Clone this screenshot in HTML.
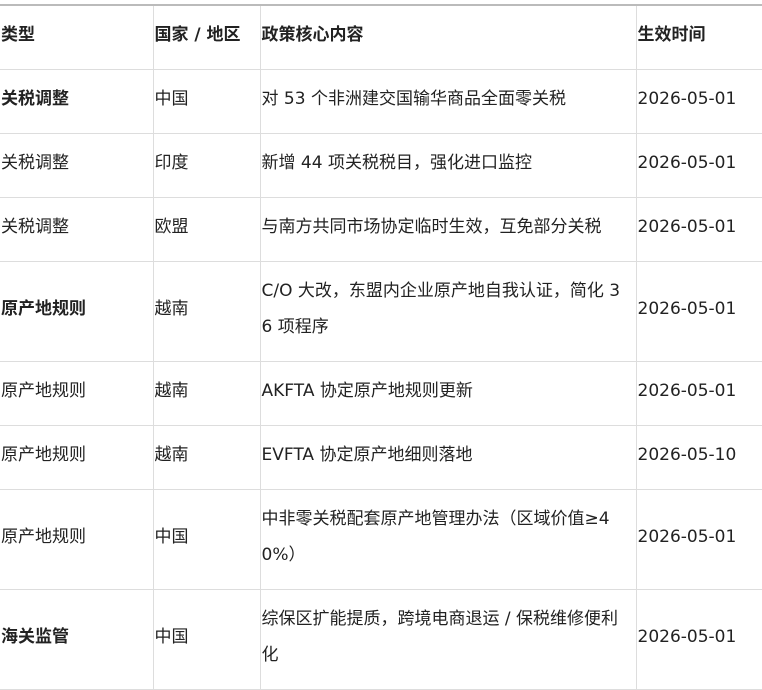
<!DOCTYPE html>
<html><head><meta charset="utf-8"><style>
body{margin:0;background:#fff;}
table{position:absolute;left:0;top:4px;border-collapse:collapse;table-layout:fixed;width:762px;border-top:2px solid #bbb;font-family:"DejaVu Sans","Noto Sans CJK SC",sans-serif;font-size:17px;color:#222;}
td,th{border:1px solid #ddd;padding:0 1px 5px 1px;line-height:36px;text-align:left;vertical-align:middle;word-break:break-all;}
tr>*:first-child{border-left:none;}
tr>*:last-child{border-right:none;}
th{font-weight:bold;}
.b{font-weight:bold;}
tr{height:64px;}
tr.t{height:100px;}
</style></head><body>
<table>
<colgroup><col style="width:153px"><col style="width:107px"><col style="width:376px"><col style="width:126px"></colgroup>
<tr><th>类型</th><th>国家 / 地区</th><th>政策核心内容</th><th>生效时间</th></tr>
<tr><td class="b">关税调整</td><td>中国</td><td>对 53 个非洲建交国输华商品全面零关税</td><td>2026-05-01</td></tr>
<tr><td>关税调整</td><td>印度</td><td>新增 44 项关税税目，强化进口监控</td><td>2026-05-01</td></tr>
<tr><td>关税调整</td><td>欧盟</td><td>与南方共同市场协定临时生效，互免部分关税</td><td>2026-05-01</td></tr>
<tr class="t"><td class="b">原产地规则</td><td>越南</td><td>C/O 大改，东盟内企业原产地自我认证，简化 3<br>6 项程序</td><td>2026-05-01</td></tr>
<tr><td>原产地规则</td><td>越南</td><td>AKFTA 协定原产地规则更新</td><td>2026-05-01</td></tr>
<tr><td>原产地规则</td><td>越南</td><td>EVFTA 协定原产地细则落地</td><td>2026-05-10</td></tr>
<tr class="t"><td>原产地规则</td><td>中国</td><td>中非零关税配套原产地管理办法（区域价值≥4<br>0%）</td><td>2026-05-01</td></tr>
<tr class="t"><td class="b">海关监管</td><td>中国</td><td>综保区扩能提质，跨境电商退运 / 保税维修便利<br>化</td><td>2026-05-01</td></tr>
</table>
</body></html>
